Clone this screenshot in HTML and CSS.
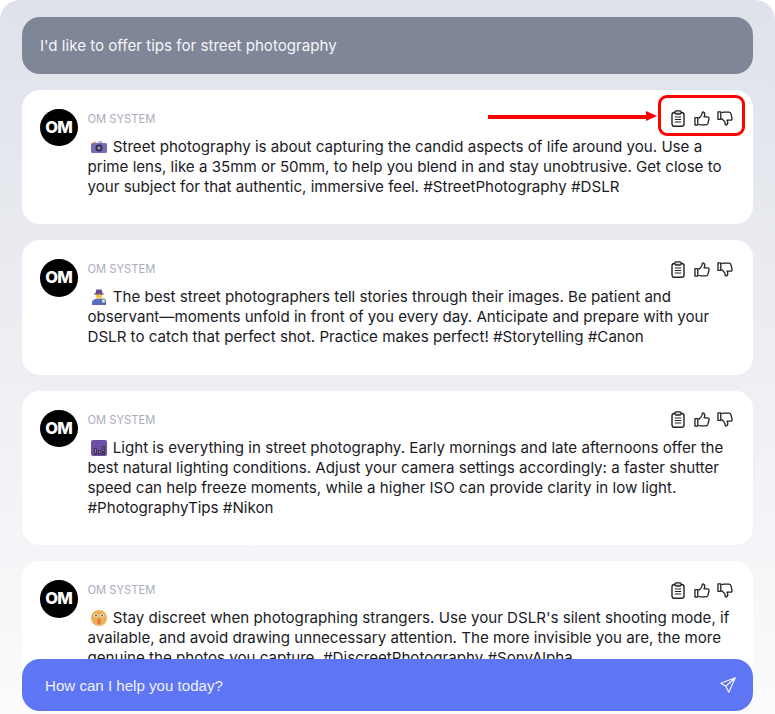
FILE: index.html
```html
<!DOCTYPE html>
<html lang="en">
<head>
  <meta charset="UTF-8" />
  <title>OM System Assistant</title>
  <link rel="stylesheet" href="styles.css">
</head>
<body>
  <svg class="defs" width="0" height="0">
    <defs>
      <symbol id="clipboard" viewBox="0 0 14 17">
        <rect x="1" y="2.500" width="12" height="13.800" rx="2.200" fill="none" stroke="#222" stroke-width="1.400"/>
        <rect x="4" y=".8" width="6" height="3.200" rx="1" fill="#ddd" stroke="#222" stroke-width="1.300"/>
        <path d="M3.800 7h6.400M3.800 9.500h6.400M3.800 12h6.400" fill="none" stroke="#222" stroke-width="1.200"/>
      </symbol>
      <symbol id="thumb" viewBox="0 0 17 16">
        <path d="M1 7h3v8H1zM5 8l2.600-2.800c.8-1 1.200-2 1.200-3.800 0-.5 2.700-.8 2.700 2 0 1.100-.4 2-.8 2.800h3.600c1.300 0 2 1 1.700 2.200l-1.200 4.800c-.3 1-1 1.600-2 1.600H7.500c-1 0-2-.3-2.500-.8" fill="none" stroke="#222" stroke-width="1.400" stroke-linejoin="round"/>
      </symbol>
    </defs>
  </svg>

  <main class="panel">
    <div class="prompt">I'd like to offer tips for street photography</div>

    <article class="card">
      <div class="logo">OM</div>
      <div class="body">
        <div class="head">
          <span class="name">OM SYSTEM</span>
          <div class="tools highlighted">
            <svg class="ic clip"><use href="#clipboard"/></svg>
            <svg class="ic"><use href="#thumb"/></svg>
            <svg class="ic down"><use href="#thumb"/></svg>
          </div>
        </div>
        <p><svg class="emoji" viewBox="0 0 16 16"><path d="M2 2.500h3.500v2H2z" fill="#f2c14e"/><path d="M6.500 3.500l1-1.500h3l1 2z" fill="#b39ddb"/><rect x="0" y="4" width="16" height="10" rx="1.500" fill="#7a6ab8"/><circle cx="8" cy="9" r="3.500" fill="#2e2a4a"/><circle cx="8" cy="9" r="1.800" fill="#8f8fb8"/></svg> Street photography is about capturing the candid aspects of life around you. Use a prime lens, like a 35mm or 50mm, to help you blend in and stay unobtrusive. Get close to your subject for that authentic, immersive feel. #StreetPhotography #DSLR</p>
      </div>
    </article>

    <article class="card">
      <div class="logo">OM</div>
      <div class="body">
        <div class="head">
          <span class="name">OM SYSTEM</span>
          <div class="tools">
            <svg class="ic clip"><use href="#clipboard"/></svg>
            <svg class="ic"><use href="#thumb"/></svg>
            <svg class="ic down"><use href="#thumb"/></svg>
          </div>
        </div>
        <p><svg class="emoji" viewBox="0 0 16 16"><path d="M1 14c0-3 2.500-4.500 7-4.500s7 1.500 7 4.500v2H1z" fill="#5c6bc0"/><circle cx="8" cy="6.500" r="3.300" fill="#f6c445"/><path d="M2.500 5.500h11L11.500 4l-.8-3.500H5.300L4.500 4z" fill="#6a4f8f"/><circle cx="12.500" cy="12" r="2.200" fill="#bfe3f5" stroke="#555" stroke-width=".7"/></svg> The best street photographers tell stories through their images. Be patient and observant—moments unfold in front of you every day. Anticipate and prepare with your DSLR to catch that perfect shot. Practice makes perfect! #Storytelling #Canon</p>
      </div>
    </article>

    <article class="card tall">
      <div class="logo">OM</div>
      <div class="body">
        <div class="head">
          <span class="name">OM SYSTEM</span>
          <div class="tools">
            <svg class="ic clip"><use href="#clipboard"/></svg>
            <svg class="ic"><use href="#thumb"/></svg>
            <svg class="ic down"><use href="#thumb"/></svg>
          </div>
        </div>
        <p><svg class="emoji" viewBox="0 0 16 16"><rect width="16" height="16" rx="2" fill="#6d4fa3"/><path d="M3 15V8h3v7zM7 15V10h2.500v5zM10.500 15V6H14v9z" fill="#3c3560"/><path d="M4 10h1M4 12h1M8 12h1M11.500 8h1M11.500 10.500h1" stroke="#f2c14e" stroke-width="1"/></svg> Light is everything in street photography. Early mornings and late afternoons offer the best natural lighting conditions. Adjust your camera settings accordingly: a faster shutter speed can help freeze moments, while a higher ISO can provide clarity in low light. #PhotographyTips #Nikon</p>
      </div>
    </article>

    <article class="card">
      <div class="logo">OM</div>
      <div class="body">
        <div class="head">
          <span class="name">OM SYSTEM</span>
          <div class="tools">
            <svg class="ic clip"><use href="#clipboard"/></svg>
            <svg class="ic"><use href="#thumb"/></svg>
            <svg class="ic down"><use href="#thumb"/></svg>
          </div>
        </div>
        <p><svg class="emoji" viewBox="0 0 16 16"><circle cx="8" cy="8" r="8" fill="#e9b258"/><circle cx="5" cy="5.500" r="1.800" fill="#fff"/><circle cx="11" cy="5.500" r="1.800" fill="#fff"/><circle cx="5" cy="5.500" r=".9" fill="#333"/><circle cx="11" cy="5.500" r=".9" fill="#333"/><path d="M6.500 9h3v5h-3z" fill="#e2703a"/></svg> Stay discreet when photographing strangers. Use your DSLR's silent shooting mode, if available, and avoid drawing unnecessary attention. The more invisible you are, the more genuine the photos you capture. #DiscreetPhotography #SonyAlpha</p>
      </div>
    </article>

    <div class="ask">
      <span>How can I help you today?</span>
      <svg class="send" viewBox="0 0 16 16"><path d="M15.300.8L.8 6.300l5 3 3 6zM5.800 9.300L15.300.8" fill="none" stroke="#f2f3ff" stroke-width="1.200" stroke-linejoin="round"/></svg>
    </div>
  </main>

  <div class="arrow"></div>
</body>
</html>
```

FILE: styles.css
```css
html, body {
  margin: 0;
  height: 100%;
  overflow: hidden;
  background: #fff;
}

body {
  font-family: Inter, "Liberation Sans", sans-serif;
  color: #1b1b1f;
}

.defs {
  position: absolute;
}

.panel {
  position: relative;
  box-sizing: border-box;
  height: 714px;
  overflow: hidden;
  padding: 17px 22px 0;
  display: flex;
  flex-direction: column;
  gap: 16px;
  border-radius: 20px 20px 0 0;
  background: linear-gradient(#dfe2ea, #fbfbfc);
}

.prompt {
  flex: none;
  height: 56.500px;
  display: flex;
  align-items: center;
  padding-left: 18px;
  border-radius: 18px;
  background: #7f8698;
  color: #f4f5f7;
  font-size: 15.120px;
}

.card {
  flex: none;
  box-sizing: border-box;
  display: flex;
  gap: 10px;
  padding: 19px 18px 27.500px;
  border-radius: 18px;
  background: #fff;
}

.logo {
  flex: none;
  width: 37.500px;
  height: 37.500px;
  border-radius: 50%;
  background: #000;
  color: #fff;
  font-size: 16.500px;
  font-weight: 800;
  letter-spacing: -.6px;
  line-height: 37.500px;
  text-align: center;
}

.body {
  flex: 1;
  min-width: 0;
}

.head {
  position: relative;
  height: 20px;
  display: flex;
  justify-content: space-between;
  align-items: center;
}

.name {
  font-size: 11.200px;
  color: #a9adbd;
}

.tools {
  display: flex;
  gap: 7.500px;
  align-items: center;
  margin-right: 2px;
}

.tools.highlighted::after {
  content: "";
  position: absolute;
  box-sizing: border-box;
  top: -13.500px;
  right: -10px;
  width: 87.500px;
  height: 41px;
  border: 3px solid #f00;
  border-radius: 9px;
}

.ic {
  width: 16px;
  height: 15px;
}

.ic.clip {
  width: 14px;
  height: 17px;
  margin-right: 1px;
}

.ic.down {
  transform: rotate(180deg) scaleX(-1);
}

p {
  margin: 8px 0 0;
  font-size: 15.120px;
  line-height: 20px;
}

.emoji {
  width: 16px;
  height: 16px;
  vertical-align: -3px;
  margin: 0 2px 0 3px;
}

.ask {
  position: absolute;
  left: 22px;
  right: 22px;
  top: 659px;
  height: 52px;
  display: flex;
  align-items: center;
  justify-content: space-between;
  padding: 0 17px 0 23px;
  border-radius: 18px;
  background: #5e75f4;
  color: #eef0ff;
  font-family: "Liberation Sans", sans-serif;
  font-size: 15.100px;
}

.send {
  width: 16px;
  height: 16px;
}

.arrow {
  position: absolute;
  left: 488px;
  top: 115px;
  width: 158px;
  height: 3.500px;
  background: #f00;
}

.arrow::after {
  content: "";
  position: absolute;
  right: -11px;
  top: -4px;
  border-left: 11px solid #f00;
  border-top: 5.750px solid transparent;
  border-bottom: 5.750px solid transparent;
}
```
